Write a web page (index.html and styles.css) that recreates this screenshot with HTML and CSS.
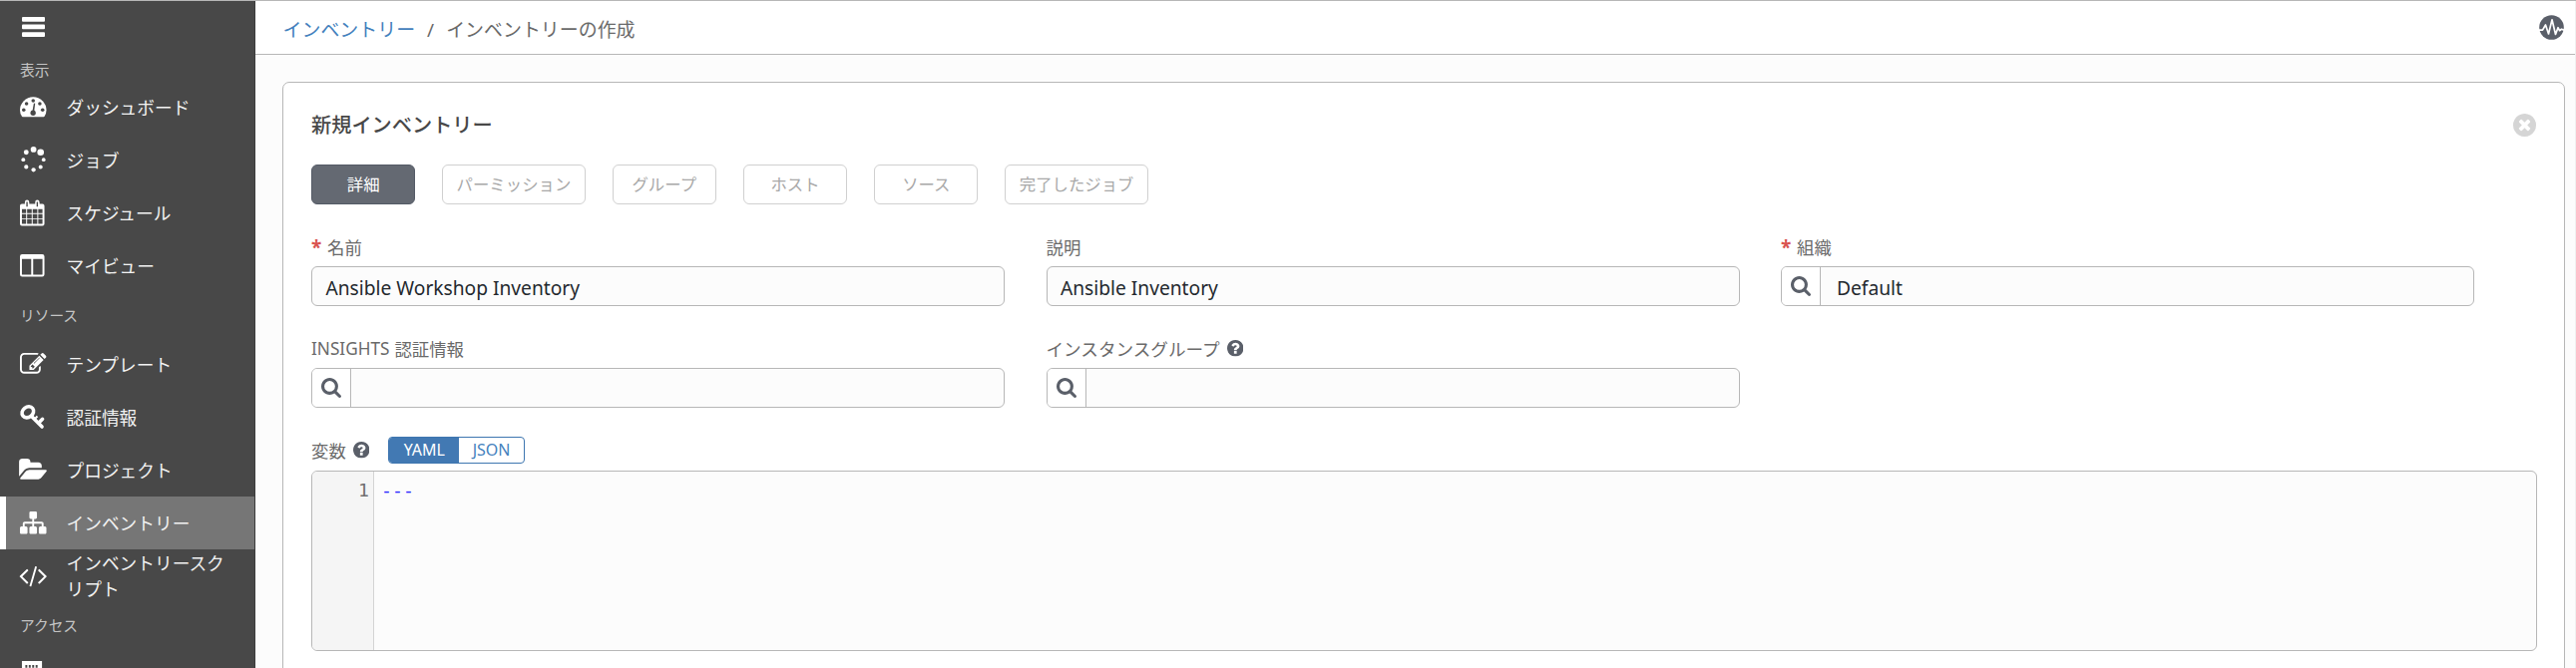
FILE: index.html
```html
<!DOCTYPE html>
<html lang="ja">
<head>
<meta charset="utf-8">
<title>インベントリーの作成</title>
<link rel="stylesheet" href="styles.css">
</head>
<body>
<svg class="defs" width="0" height="0">
  <symbol id="search" viewBox="64 128 1664 1664"><path d="M1216 832q0-185-131.500-316.500t-316.500-131.500-316.500 131.500-131.500 316.500 131.500 316.500 316.500 131.500 316.500-131.500 131.500-316.500zm512 832q0 52-38 90t-90 38q-54 0-90-38l-343-342q-179 124-399 124-143 0-273.500-55.500t-225-150-150-225-55.500-273.500 55.500-273.500 150-225 225-150 273.500-55.500 273.500 55.500 225 150 150 225 55.500 273.500q0 220-124 399l343 343q37 37 37 90z"/></symbol>
  <symbol id="help" viewBox="128 128 1536 1536"><path d="M1024 1376v-192q0-14-9-23t-23-9h-192q-14 0-23 9t-9 23v192q0 14 9 23t23 9h192q14 0 23-9t9-23zm256-672q0-88-55.500-163t-138.500-116-170-41q-243 0-371 213-15 24 8 42l132 100q7 6 19 6 16 0 25-12 53-68 86-92 34-24 86-24 48 0 85.500 26t37.500 59q0 38-20 61t-68 45q-63 28-115.500 86.500t-52.500 125.500v36q0 14 9 23t23 9h192q14 0 23-9t9-23q0-19 21.500-49.500t54.500-49.500q32-18 49-28.500t46-35 44.500-48 28-60.500 12.500-81zm384 192q0 209-103 385.500t-279.500 279.500-385.500 103-385.500-103-279.500-279.500-103-385.500 103-385.500 279.500-279.500 385.500-103 385.500 103 279.500 279.500 103 385.500z"/></symbol>
</svg>
<div class="app">
  <nav class="sidebar">
    <div class="menu"><svg width="23" height="20" viewBox="0 0 23 20" fill="#fff"><rect y="0" width="23" height="4.700" rx="1"/><rect y="7.600" width="23" height="4.700" rx="1"/><rect y="15.200" width="23" height="4.700" rx="1"/></svg></div>
    <div class="heading first">表示</div>
    <a class="item"><svg class="icon" viewBox="0 0 1792 1792"><path d="M130 1536Q0 1340 0 1120A896 896 0 0 1 1792 1120Q1792 1340 1662 1536Q1640 1568 1608 1568H184Q152 1568 130 1536Z"/><g class="cut"><circle cx="256" cy="1100" r="120"/><circle cx="445" cy="670" r="120"/><circle cx="896" cy="480" r="120"/><circle cx="1347" cy="670" r="120"/><circle cx="1536" cy="1100" r="120"/><circle cx="890" cy="1300" r="180"/><path d="M1030 660L960 1240L840 1200L940 650Z"/></g></svg><span>ダッシュボード</span></a>
    <a class="item"><svg class="icon" viewBox="0 0 1792 1792"><circle cx="920" cy="200" r="195"/><circle cx="1400" cy="390" r="225"/><circle cx="1605" cy="890" r="125"/><circle cx="1400" cy="1380" r="135"/><circle cx="920" cy="1580" r="145"/><circle cx="425" cy="1380" r="140"/><circle cx="225" cy="890" r="130"/><circle cx="425" cy="390" r="165"/></svg><span>ジョブ</span></a>
    <a class="item"><svg class="icon" viewBox="0 0 27 27"><path fill-rule="evenodd" d="M2 4.500h3V3q0-2.500 2.200-2.500T9.500 3v1.500h6V3q0-2.500 2.200-2.500T20 3v1.500h3q2 0 2 2V25q0 2-2 2H2q-2 0-2-2V6.500q0-2 2-2zM2 10v4h4.300v-4zM7.300 10v4h4.700v-4zM13 10v4h4.700v-4zM18.700 10v4H23v-4zM2 15v4.500h4.300V15zM7.300 15v4.500h4.700V15zM13 15v4.500h4.700V15zM18.700 15v4.500H23V15zM2 20.500V25h4.300v-4.500zM7.300 20.500V25h4.700v-4.500zM13 20.500V25h4.700v-4.500zM18.700 20.500V25H23v-4.500zM6.500 2.500v5h1.400v-5zM17 2.500v5h1.400v-5z"/></svg><span>スケジュール</span></a>
    <a class="item"><svg class="icon" viewBox="0 0 27 27"><path fill-rule="evenodd" d="M2.300 2H22.700Q25 2 25 4.300V22.700Q25 25 22.700 25H2.300Q0 25 0 22.700V4.300Q0 2 2.300 2zM2 7V22.300q0 .7.700.7H11.500V7zM13.500 7V23H22.300q.7 0 .7-.7V7z"/></svg><span>マイビュー</span></a>
    <div class="heading">リソース</div>
    <a class="item"><svg class="icon" viewBox="0 0 1792 1792"><path d="M888 1184l116-116-152-152-116 116v56h96v96h56zm440-720q-16-16-33 1l-350 350q-17 17-1 33t33-1l350-350q17-17 1-33zm80 594v190q0 119-84.500 203.500t-203.500 84.500h-832q-119 0-203.500-84.500t-84.500-203.500v-832q0-119 84.500-203.500t203.500-84.500h832q63 0 117 25 15 7 18 23 3 17-9 29l-49 49q-14 14-32 8-23-6-45-6h-832q-66 0-113 47t-47 113v832q0 66 47 113t113 47h832q66 0 113-47t47-113v-126q0-13 9-22l64-64q15-15 35-7t20 29zm-96-738l288 288-672 672h-288v-288zm444 132l-92 92-288-288 92-92q28-28 68-28t68 28l152 152q28 28 28 68t-28 68z"/></svg><span>テンプレート</span></a>
    <a class="item"><svg class="icon" viewBox="0 0 27 27"><g fill="none" stroke="#fff" stroke-width="3.600"><ellipse cx="8" cy="8.500" rx="6.300" ry="5.200" transform="rotate(-38 8 8.500)"/><path d="M11.500 12.500L22.500 23.500M18.800 19.800l4.200-4.200" stroke-linecap="round"/><path d="M14.800 15.800l3-3" stroke-width="2"/></g></svg><span>認証情報</span></a>
    <a class="item"><svg class="icon folder" viewBox="0 0 1880 1792"><path d="M1879 952q0 31-31 66l-336 396q-43 51-120.500 86.500t-143.500 35.500h-1088q-34 0-60.500-13t-26.500-43q0-31 31-66l336-396q43-51 120.500-86.500t143.500-35.500h1088q34 0 60.500 13t26.500 43zm-343-344v160h-832q-94 0-197 47.500t-164 119.500l-337 396-5 6q0-4-.5-12.500t-.5-12.500v-960q0-92 66-158t158-66h320q92 0 158 66t66 158v32h544q92 0 158 66t66 158z"/></svg><span>プロジェクト</span></a>
    <a class="item active"><svg class="icon" viewBox="0 0 1792 1792"><path d="M1792 1248v320q0 40-28 68t-68 28h-320q-40 0-68-28t-28-68v-320q0-40 28-68t68-28h96v-192h-512v192h96q40 0 68 28t28 68v320q0 40-28 68t-68 28h-320q-40 0-68-28t-28-68v-320q0-40 28-68t68-28h96v-192h-512v192h96q40 0 68 28t28 68v320q0 40-28 68t-68 28h-320q-40 0-68-28t-28-68v-320q0-40 28-68t68-28h96v-192q0-52 38-90t90-38h512v-192h-96q-40 0-68-28t-28-68v-320q0-40 28-68t68-28h320q40 0 68 28t28 68v320q0 40-28 68t-68 28h-96v192h512q52 0 90 38t38 90v192h96q40 0 68 28t28 68z"/></svg><span>インベントリー</span></a>
    <a class="item"><svg class="icon" viewBox="0 0 1792 1792"><path d="M553 1399l-50 50q-10 10-23 10t-23-10l-466-466q-10-10-10-23t10-23l466-466q10-10 23-10t23 10l50 50q10 10 10 23t-10 23l-393 393 393 393q10 10 10 23t-10 23zm591-1067l-373 1291q-4 13-15.500 19.500t-23.500 2.500l-62-17q-13-4-19.500-15.500t-2.500-24.500l373-1291q4-13 15.500-19.500t23.500-2.500l62 17q13 4 19.500 15.500t2.500 24.500zm657 651l-466 466q-10 10-23 10t-23-10l-50-50q-10-10-10-23t10-23l393-393-393-393q-10-10-10-23t10-23l50-50q10-10 23-10t23 10l466 466q10 10 10 23t-10 23z"/></svg><span>インベントリースク<br>リプト</span></a>
    <div class="heading">アクセス</div>
    <a class="item"><svg class="icon" viewBox="0 0 27 27"><path fill-rule="evenodd" d="M2 0H22.500V27H2zM5.500 4v3h2V4zM9 4v3h2V4zM12.500 4v3h2V4zM16 4v3h2V4z"/></svg></a>
  </nav>
  <div class="main">
    <header class="topbar">
      <div class="crumbs"><a class="link">インベントリー</a><span class="slash">/</span><span>インベントリーの作成</span></div>
      <svg class="activity" viewBox="0 0 25 25"><circle cx="12.500" cy="12.500" r="12.300" fill="#5a5f69"/><path d="M0 15.200H3.500L6.500 10L9.500 19L13 4.800L16.500 19.500L19 12.700L20.500 15.700L22.500 14.200L25 15.200" fill="none" stroke="#fff" stroke-width="1.700" stroke-linejoin="round"/></svg>
    </header>
    <section class="panel">
      <div class="title-row"><h1>新規インベントリー</h1>
        <svg class="close" viewBox="128 128 1536 1536"><path d="M1277 1122q0-26-19-45l-181-181 181-181q19-19 19-45 0-27-19-46l-90-90q-19-19-46-19-26 0-45 19l-181 181-181-181q-19-19-45-19-27 0-46 19l-90 90q-19 19-19 46 0 26 19 45l181 181-181 181q-19 19-19 45 0 27 19 46l90 90q19 19 46 19 26 0 45-19l181-181 181 181q19 19 45 19 27 0 46-19l90-90q19-19 19-46zm387-226q0 209-103 385.500t-279.500 279.500-385.500 103-385.500-103-279.500-279.500-103-385.500 103-385.500 279.500-279.500 385.500-103 385.500 103 279.500 279.500 103 385.500z"/></svg>
      </div>
      <div class="tabs">
        <span class="tab on">詳細</span><span class="tab wide">パーミッション</span><span class="tab">グループ</span><span class="tab">ホスト</span><span class="tab">ソース</span><span class="tab wide">完了したジョブ</span>
      </div>
      <div class="fields">
        <div class="field"><div class="label"><b class="req">*</b>名前</div><div class="input"><span class="value">Ansible Workshop Inventory</span></div></div>
        <div class="field"><div class="label">説明</div><div class="input"><span class="value">Ansible Inventory</span></div></div>
        <div class="field"><div class="label"><b class="req">*</b>組織</div><div class="input"><span class="lookup"><svg><use href="#search"/></svg></span><span class="value">Default</span></div></div>
        <div class="field"><div class="label"><span class="latin">INSIGHTS</span>認証情報</div><div class="input"><span class="lookup"><svg><use href="#search"/></svg></span></div></div>
        <div class="field"><div class="label"><span class="kana">インスタンスグループ</span><svg class="help"><use href="#help"/></svg></div><div class="input"><span class="lookup"><svg><use href="#search"/></svg></span></div></div>
      </div>
      <div class="vars"><span>変数</span><svg class="help"><use href="#help"/></svg>
        <div class="toggle"><span class="yaml">YAML</span><span class="json">JSON</span></div>
      </div>
      <div class="editor"><div class="gutter">1</div><div class="code">---</div></div>
    </section>
  </div>
</div>
</body>
</html>
```
FILE: styles.css
```css
* { box-sizing: border-box; }
body {
  margin: 0;
  height: 670px;
  overflow: hidden;
  background: #fcfcfc;
  color: #6a6a6a;
  font-family: "Noto Sans", "Noto Sans CJK JP", sans-serif;
  font-size: 17.4px;
}
.defs { position: absolute; }
.app { display: flex; height: 670px; border-top: 1.500px solid #b7b7b7; overflow: hidden; }

.sidebar { width: 256px; flex: none; background: #484848; color: #f2f2f2; overflow: hidden; border-right: 1px solid #3d3d3d; }
.menu { height: 51px; padding: 16px 0 0 21.500px; }
.menu svg { display: block; }
.heading { height: 46px; padding-left: 20px; font-size: 14.7px; line-height: 46px; color: #c4c4c4; }
.heading.first { height: 29px; line-height: 36px; }
.item { display: flex; align-items: center; height: 53px; padding-left: 20px; font-size: 17.7px; line-height: 26px; white-space: nowrap; }
.item span { margin-left: 20px; padding-top: 1px; }
.item.active { background: #767676; padding-left: 14px; border-left: 6px solid #fff; }
.icon { width: 26.500px; height: 26.500px; flex: none; fill: #fff; overflow: visible; }
.cut { fill: #484848; }
.folder { width: 28px; margin: 0 -0.5px 0 -1px; }

.main { flex: 1; min-width: 0; border-right: 1px solid #f0f0f0; }
.topbar { display: flex; align-items: center; justify-content: space-between; height: 54px; padding: 0 11px 0 27.500px; background: #fff; border-bottom: 1px solid #b7b7b7; }
.crumbs { font-size: 18.95px; padding-top: 5px; line-height: 26px; white-space: nowrap; }
.link { color: #4481bd; }
.slash { margin: 0 12px 0 12px; }
.activity { width: 25px; height: 25px; }

.panel { margin: 27px 10px 0 27px; height: 640px; padding: 27px 28px 0; background: #fff; border: 1.500px solid #b7b7b7; border-radius: 7px; }
.title-row { display: flex; justify-content: space-between; align-items: center; height: 30px; }
h1 { margin: 0; font-size: 20.2px; line-height: 30px; font-weight: 500; color: #484848; }
.close { width: 23px; height: 23px; fill: #d5d5d5; }
.tabs { display: flex; gap: 27px; margin-top: 25px; }
.tab { display: flex; align-items: center; justify-content: center; width: 104.300px; height: 40px; border: 1px solid #d0d0d0; border-radius: 6px; font-size: 16.4px; color: #a8a8a8; line-height: 24px; padding-bottom: 1px; white-space: nowrap; }
.tab.wide { width: 143.300px; }
.tab.on { background: #646972; border-color: #545a66; color: #fff; }
.fields { display: grid; grid-template-columns: repeat(3, 695px); column-gap: 41.500px; row-gap: 30.500px; margin-top: 31px; }
.label { display: flex; align-items: center; height: 24px; margin-bottom: 7px; line-height: 24px; white-space: nowrap; }
.req { width: 16px; color: #d9534f; font-size: 19px; }
.latin { margin-right: 5px; font-size: 17.2px; }
.kana { font-size: 17.6px; }
.help { width: 16.500px; height: 16.500px; margin-left: 7px; fill: #5a5f69; }
.input { display: flex; height: 40px; border: 1px solid #b7b7b7; border-radius: 6px; background: #fcfcfc; overflow: hidden; color: #24292e; }
.value { padding-left: 13.500px; font-size: 19.2px; line-height: 41px; }
.lookup { display: flex; align-items: center; justify-content: center; width: 39px; border-right: 1px solid #b7b7b7; background: #fff; }
.lookup svg { width: 20px; height: 20px; fill: #5a5f69; }
.lookup + .value { padding-left: 16px; }
.vars { display: flex; align-items: center; height: 27px; margin-top: 29.500px; line-height: 24px; }
.toggle { display: flex; width: 136.500px; height: 27px; margin-left: 19px; border: 1px solid #3e76b0; border-radius: 4px; overflow: hidden; font-size: 16px; text-align: center; line-height: 25px; background: #fff; }
.yaml { width: 70px; background: #4279b3; color: #fff; }
.json { flex: 1; color: #4481bd; }
.editor { display: flex; margin-top: 7px; height: 181px; width: 2231px; border: 1px solid #b7b7b7; border-radius: 6px; background: #fcfcfc; overflow: hidden; font-family: "DejaVu Sans Mono", monospace; font-size: 18.2px; line-height: 26px; padding: 0; }
.gutter { width: 62px; border-right: 1px solid #d4d4d4; background: #f5f5f5; color: #707070; text-align: right; padding: 5.500px 4px 0 0; }
.code { padding: 5.500px 0 0 7px; color: #2b2bff; }
```
